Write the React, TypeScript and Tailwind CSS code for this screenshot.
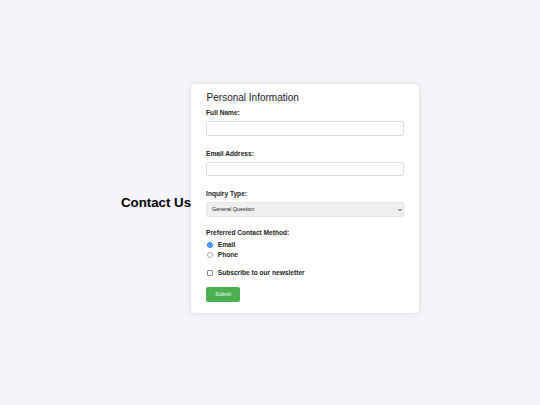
import React from "react";

export default function App() {
  return (
    <div className="flex h-screen min-h-[405px] items-center justify-center bg-[#f4f4f9] font-['Liberation_Sans',Arial,sans-serif] text-[#222]">
      <h1 className="m-0 text-[13.3px] font-bold leading-none text-black">Contact Us</h1>
      <form
        className="mb-[8px] flex w-[228px] flex-col rounded-[4px] bg-white px-[15px] pb-[11.5px] pt-[8.5px] shadow-[0_0_6px_rgba(0,0,0,0.12)]"
        onSubmit={(e) => e.preventDefault()}
      >
        <h2 className="m-0 ml-[0.5px] text-[10px] font-normal leading-[12px] text-[#222]">Personal Information</h2>

        <label className="mt-[5px] block text-[6.6px] font-bold leading-[8px]">Full Name:</label>
        <input
          type="text"
          className="mt-[4px] box-border h-[14.5px] w-full rounded-[2px] border border-[#dcdcdc] bg-white outline-none"
        />

        <label className="mt-[14px] block text-[6.6px] font-bold leading-[8px]">Email Address:</label>
        <input
          type="email"
          className="mt-[4px] box-border h-[14.5px] w-full rounded-[2px] border border-[#dcdcdc] bg-white outline-none"
        />

        <label className="mt-[14px] block text-[6.6px] font-bold leading-[8px]">Inquiry Type:</label>
        <div className="relative mt-[3.5px]">
          <select
            defaultValue="general"
            className="box-border block h-[15.5px] w-full appearance-none rounded-[2px] border border-[#e4e4e4] bg-[#efefef] pl-[5px] text-[5.4px] leading-none text-[#222] outline-none"
          >
            <option value="general">General Question</option>
            <option value="support">Support</option>
            <option value="feedback">Feedback</option>
          </select>
          <svg
            className="pointer-events-none absolute right-[2.5px] top-1/2 -translate-y-1/2"
            width="4"
            height="3"
            viewBox="0 0 8 6"
          >
            <path d="M1 1.2 L4 4.4 L7 1.2" fill="none" stroke="#222" strokeWidth="1.8" />
          </svg>
        </div>

        <span className="mt-[11.5px] block text-[6.6px] font-bold leading-[8px]">Preferred Contact Method:</span>
        <div className="mt-[3px] flex flex-col">
          <label className="flex h-[10px] items-center gap-[5px] text-[6.6px] font-bold">
            <input
              type="radio"
              name="method"
              defaultChecked
              className="m-0 ml-[1.2px] box-border h-[5.5px] w-[5.5px] shrink-0 appearance-none rounded-full border-[0.8px] border-[#a8a8a8] bg-white checked:border-[1.2px] checked:border-[#1a7cff] checked:bg-[#1a7cff] checked:shadow-[inset_0_0_0_0.6px_#cfe3ff]"
            />
            Email
          </label>
          <label className="flex h-[10px] items-center gap-[5px] text-[6.6px] font-bold">
            <input
              type="radio"
              name="method"
              className="m-0 ml-[1.2px] box-border h-[5.5px] w-[5.5px] shrink-0 appearance-none rounded-full border-[0.8px] border-[#a8a8a8] bg-white checked:border-[1.2px] checked:border-[#1a7cff] checked:bg-[#1a7cff] checked:shadow-[inset_0_0_0_0.6px_#cfe3ff]"
            />
            Phone
          </label>
        </div>

        <label className="mt-[8px] flex h-[10px] items-center gap-[5px] text-[6.6px] font-bold">
          <input
            type="checkbox"
            className="m-0 ml-[1.2px] box-border h-[5.5px] w-[5.5px] shrink-0 appearance-none rounded-[1px] border-[0.8px] border-[#8a8a8a] bg-white checked:border-[#0075ff] checked:bg-[#0075ff]"
          />
          Subscribe to our newsletter
        </label>

        <button
          type="submit"
          className="mt-[9.5px] flex h-[14.5px] w-[34px] items-center justify-center rounded-[2px] bg-[#4caf50] text-[5px] leading-none text-white"
        >
          Submit
        </button>
      </form>
    </div>
  );
}
